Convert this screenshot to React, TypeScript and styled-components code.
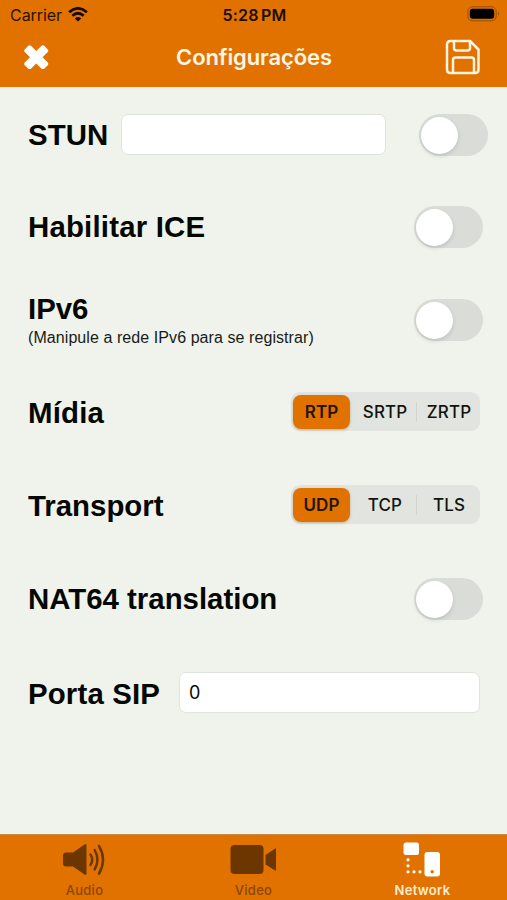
import React, { useState } from "react";
import styled, { createGlobalStyle } from "styled-components";

const ORANGE = "#e17200";

const GlobalStyle = createGlobalStyle`
  * { box-sizing: border-box; }
  body { margin: 0; background: #eff3eb; }
  button, input { font: inherit; color: inherit; margin: 0; }
  button { border: 0; padding: 0; background: none; cursor: pointer; }
`;

const Screen = styled.div`
  width: 507px;
  height: 900px;
  display: flex;
  flex-direction: column;
  overflow: hidden;
  background: #eff3eb;
  color: #050705;
  font-family: Inter, "Liberation Sans", sans-serif;
`;

const Top = styled.header`
  height: 87px;
  flex: none;
  background: ${ORANGE};
`;

const StatusBar = styled.div`
  height: 29px;
  display: grid;
  grid-template-columns: 1fr auto 1fr;
  align-items: center;
  padding: 0 7px 0 10px;
  font-size: 16px;
  color: #281300;
`;

const Carrier = styled.div`
  display: flex;
  align-items: center;
  gap: 6px;
  letter-spacing: -0.05px;
`;

const Clock = styled.div`
  margin-left: -1px;
  font-weight: 600;
  letter-spacing: 0.2px;
  word-spacing: -2px;
  color: #1c0d00;
`;

const BatteryIcon = styled.svg`
  justify-self: end;
  margin-top: -2px;
`;

const NavBar = styled.div`
  height: 58px;
  display: grid;
  grid-template-columns: 1fr auto 1fr;
  align-items: center;
  padding: 0 26px 2px 24px;
`;

const Title = styled.h1`
  margin: 0 0 0 3px;
  font-size: 22px;
  font-weight: 600;
  line-height: 28px;
  letter-spacing: -0.1px;
  color: #fff6e5;
`;

const IconButton = styled.button<{ $end?: boolean }>`
  display: flex;
  justify-self: ${(p) => (p.$end ? "end" : "start")};
`;

const Settings = styled.main`
  flex: 1;
  padding: 1px 24px 0 28px;
`;

const Row = styled.div`
  height: 93px;
  display: flex;
  align-items: flex-start;
  justify-content: space-between;
`;

const Label = styled.div<{ $top?: number; $spacing?: number }>`
  margin-top: ${(p) => p.$top ?? 29}px;
  font: bold 29.4px/34px "Liberation Sans", Arial, sans-serif;
  letter-spacing: ${(p) => p.$spacing ?? 0}px;
  white-space: nowrap;
`;

const Hint = styled.div`
  font: 16px/18px "Liberation Sans", Arial, sans-serif;
  letter-spacing: 0.075px;
  margin-top: 3px;
  color: #181b18;
  white-space: nowrap;
`;

const Field = styled.input<{ $width: number; $right: number }>`
  width: ${(p) => p.$width}px;
  height: 41px;
  margin: 26px ${(p) => p.$right}px 0 auto;
  padding: 0 9px 1px;
  border: 1px solid #e0e4de;
  border-radius: 7px;
  background: #fff;
  font-size: 18px;
  outline: none;
`;

const Switch = styled.button<{ $on: boolean; $top: number; $right?: number }>`
  width: 69px;
  height: 42px;
  flex: none;
  display: flex;
  align-items: center;
  justify-content: ${(p) => (p.$on ? "flex-end" : "flex-start")};
  margin: ${(p) => `${p.$top}px ${p.$right ?? 0}px 0 0`};
  padding: 0 2px;
  border-radius: 21px;
  background: ${(p) => (p.$on ? ORANGE : "#dadcd8")};
`;

const Knob = styled.span`
  width: 37px;
  height: 37px;
  border-radius: 50%;
  background: #fff;
  box-shadow: 0 2px 4px rgba(0, 0, 0, 0.13);
`;

const Segments = styled.div`
  display: flex;
  align-items: center;
  width: 189px;
  height: 39px;
  margin: 25px 3px 0 0;
  padding: 2px 0 2px 2px;
  border-radius: 9px;
  background: #e2e5df;
`;

const Segment = styled.button<{ $active: boolean; $width: number; $divided: boolean; $inset: number }>`
  width: ${(p) => p.$width}px;
  height: ${(p) => (p.$active ? 34 : 20)}px;
  padding-left: ${(p) => p.$inset}px;
  line-height: 20px;
  border-radius: ${(p) => (p.$divided ? 0 : 8)}px;
  border-left: ${(p) => (p.$divided ? "1px solid #d2d5cf" : "0")};
  background: ${(p) => (p.$active ? ORANGE : "transparent")};
  box-shadow: ${(p) => (p.$active ? "0 1px 3px rgba(70, 35, 0, .25)" : "none")};
  font-size: 17px;
  font-weight: ${(p) => (p.$active ? 600 : 500)};
  letter-spacing: 0.1px;
  color: ${(p) => (p.$active ? "#271300" : "#111411")};
`;

const TabBar = styled.nav`
  flex: none;
  height: 66px;
  display: grid;
  grid-template-columns: repeat(3, 1fr);
  border-top: 1px solid #c98a48;
  background: ${ORANGE};
`;

const Tab = styled.button<{ $active: boolean }>`
  display: flex;
  flex-direction: column;
  align-items: center;
  padding: 5px 0 0;
  font-size: 13px;
  line-height: 16px;
  font-weight: ${(p) => (p.$active ? 600 : 500)};
  letter-spacing: 0.3px;
  color: ${(p) => (p.$active ? "#ffeccf" : "#8b4700")};
`;

const TabIcon = styled.svg`
  display: block;
  width: 52px;
  height: 41px;
  margin: 0 3px 1px 0;
  color: #6c3600;
`;

function Toggle({ label, top, right }: { label: string; top: number; right?: number }) {
  const [on, setOn] = useState(false);
  return (
    <Switch role="switch" aria-label={label} aria-checked={on} $on={on} $top={top} $right={right} onClick={() => setOn(!on)}>
      <Knob />
    </Switch>
  );
}

const segmentWidths = [57, 66, 64];
const segmentInsets = [0, 4, 1];

function SegmentedControl({ options }: { options: string[] }) {
  const [selected, setSelected] = useState(0);
  return (
    <Segments>
      {options.map((option, i) => (
        <Segment
          key={option}
          $active={i === selected}
          $divided={i > 0 && i !== selected && i - 1 !== selected}
          $width={segmentWidths[i]}
          $inset={segmentInsets[i]}
          onClick={() => setSelected(i)}
        >
          {option}
        </Segment>
      ))}
    </Segments>
  );
}

const tabs = [
  {
    name: "Audio",
    icon: (
      <>
        <path d="M9 12.500h7L27.500 4.500q2-1.200 2 1v28q0 2.200-2 1L16 26.500H9q-3 0-3-3v-8q0-3 3-3Z" fill="currentColor" />
        <path d="M33.500 14.500q3.400 5.200 0 10.400M37.700 10q5.400 9.700 0 19.400M42 5.800q8 13.900 0 27.800" fill="none" stroke="currentColor" strokeWidth="2.500" strokeLinecap="round" />
      </>
    ),
  },
  {
    name: "Video",
    icon: (
      <>
        <rect x="4.500" y="5" width="33" height="29" rx="4" fill="currentColor" />
        <path d="M39.500 15 50 8v23l-10.500-6.500Z" fill="currentColor" />
      </>
    ),
  },
  {
    name: "Network",
    icon: (
      <>
        <g fill="#fff">
          <rect x="8.500" y="2.500" width="15.500" height="12.500" rx="2.500" />
          <rect x="29.500" y="12" width="15.500" height="24.500" rx="3" />
        </g>
        <path d="M13 19.800v.01M13 25.800v.01M13 31.800v.01M19 31.800v.01M25 31.800v.01" stroke="#fff" strokeWidth="3.200" strokeLinecap="round" />
        <circle cx="37.200" cy="31.700" r="1.700" fill={ORANGE} />
      </>
    ),
  },
];

export default function App() {
  const [activeTab, setActiveTab] = useState("Network");
  return (
    <Screen>
      <GlobalStyle />
      <Top>
        <StatusBar>
          <Carrier>
            Carrier
            <svg width="20" height="15" viewBox="0 0 20 15" fill="none" stroke="#170a00" strokeWidth="2.700">
              <path d="M1.100 5.200q8.900-7.700 17.800 0M4.300 8.700q5.700-4.900 11.400 0" />
              <path d="M6.800 11.400q3.200-2.600 6.400 0L10 14.600Z" fill="#170a00" stroke="none" />
            </svg>
          </Carrier>
          <Clock>5:28 PM</Clock>
          <BatteryIcon width="33" height="16" viewBox="0 0 33 16">
            <rect x="0.800" y="0.800" width="28.400" height="14" rx="4.500" fill="none" stroke="#9a4e00" />
            <rect x="2.800" y="2.800" width="24.400" height="10" rx="2.800" fill="#000" />
            <path d="M31 5.800q2 2 0 4Z" fill="#9a4e00" />
          </BatteryIcon>
        </StatusBar>
        <NavBar>
          <IconButton aria-label="Fechar">
            <svg width="25" height="24" viewBox="0 0 25 24" fill="#fff">
              <rect x="-1.500" y="7.900" width="27.500" height="8.800" rx="2.200" transform="rotate(45 12.250 12.300)" />
              <rect x="-1.500" y="7.900" width="27.500" height="8.800" rx="2.200" transform="rotate(-45 12.250 12.300)" />
            </svg>
          </IconButton>
          <Title>Configurações</Title>
          <IconButton $end aria-label="Salvar">
            <svg width="36" height="36" viewBox="0 0 36 36" fill="none" stroke="#fff4df" strokeWidth="2.500" strokeLinejoin="round">
              <path d="M5.500 2H25l8.500 8.500v20q0 3.500-3.500 3.500H5.500Q2 34 2 30.500v-25Q2 2 5.500 2Z" />
              <path d="M9 2v7q0 2.500 2.500 2.500h11Q25 11.500 25 9V2M8 34V21q0-2.500 2.500-2.500h16Q29 18.500 29 21v13" />
            </svg>
          </IconButton>
        </NavBar>
      </Top>
      <Settings>
        <Row>
          <Label $top={30} $spacing={0.1}>STUN</Label>
          <Field aria-label="STUN" $width={265} $right={33} />
          <Toggle label="STUN" top={26} right={-5} />
        </Row>
        <Row>
          <Label $spacing={0.2}>Habilitar ICE</Label>
          <Toggle label="Habilitar ICE" top={25} />
        </Row>
        <Row>
          <div>
            <Label $top={18}>IPv6</Label>
            <Hint>(Manipule a rede IPv6 para se registrar)</Hint>
          </div>
          <Toggle label="IPv6" top={25} />
        </Row>
        <Row>
          <Label $spacing={0.2}>Mídia</Label>
          <SegmentedControl options={["RTP", "SRTP", "ZRTP"]} />
        </Row>
        <Row>
          <Label>Transport</Label>
          <SegmentedControl options={["UDP", "TCP", "TLS"]} />
        </Row>
        <Row>
          <Label>NAT64 translation</Label>
          <Toggle label="NAT64 translation" top={25} />
        </Row>
        <Row>
          <Label $top={31} $spacing={0.15}>Porta SIP</Label>
          <Field aria-label="Porta SIP" defaultValue="0" $width={301} $right={3} />
        </Row>
      </Settings>
      <TabBar>
        {tabs.map((tab) => (
          <Tab key={tab.name} $active={tab.name === activeTab} onClick={() => setActiveTab(tab.name)}>
            <TabIcon viewBox="0 0 52 41">{tab.icon}</TabIcon>
            {tab.name}
          </Tab>
        ))}
      </TabBar>
    </Screen>
  );
}
